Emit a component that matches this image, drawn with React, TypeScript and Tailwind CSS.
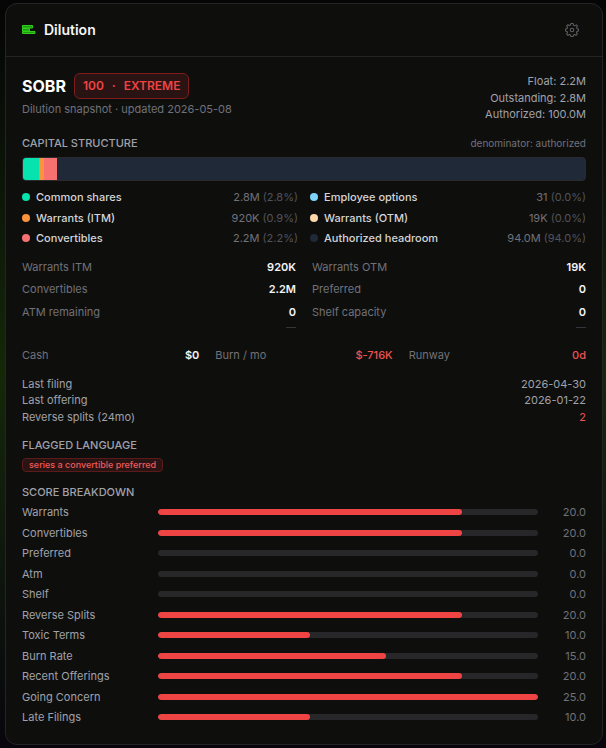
type LegendItem = {
  label: string;
  value: string;
  pct: string;
  dot: string;
};

type Stat = {
  label: string;
  value: string;
  note?: string;
  danger?: boolean;
};

const legend: LegendItem[] = [
  { label: 'Common shares', value: '2.8M', pct: '2.8%', dot: 'bg-[#06e3ae]' },
  { label: 'Employee options', value: '31', pct: '0.0%', dot: 'bg-[#7dd3fc]' },
  { label: 'Warrants (ITM)', value: '920K', pct: '0.9%', dot: 'bg-[#fb923c]' },
  { label: 'Warrants (OTM)', value: '19K', pct: '0.0%', dot: 'bg-[#fed7aa]' },
  { label: 'Convertibles', value: '2.2M', pct: '2.2%', dot: 'bg-[#f87171]' },
  { label: 'Authorized headroom', value: '94.0M', pct: '94.0%', dot: 'bg-[#1f2937]' },
];

const segments = [
  { key: 'common', pct: 2.9, color: 'bg-[#06e3ae]' },
  { key: 'itm', pct: 0.9, color: 'bg-[#fb923c]' },
  { key: 'convertibles', pct: 2.3, color: 'bg-[#f87171]' },
];

const stats: Stat[] = [
  { label: 'Warrants ITM', value: '920K' },
  { label: 'Warrants OTM', value: '19K' },
  { label: 'Convertibles', value: '2.2M' },
  { label: 'Preferred', value: '0' },
  { label: 'ATM remaining', value: '0', note: '—' },
  { label: 'Shelf capacity', value: '0', note: '—' },
];

const cash: Stat[] = [
  { label: 'Cash', value: '$0' },
  { label: 'Burn / mo', value: '$-716K', danger: true },
  { label: 'Runway', value: '0d', danger: true },
];

const events: Stat[] = [
  { label: 'Last filing', value: '2026-04-30' },
  { label: 'Last offering', value: '2026-01-22' },
  { label: 'Reverse splits (24mo)', value: '2', danger: true },
];

const MAX_SCORE = 25;

const scores = [
  { label: 'Warrants', score: 20 },
  { label: 'Convertibles', score: 20 },
  { label: 'Preferred', score: 0 },
  { label: 'Atm', score: 0 },
  { label: 'Shelf', score: 0 },
  { label: 'Reverse Splits', score: 20 },
  { label: 'Toxic Terms', score: 10 },
  { label: 'Burn Rate', score: 15 },
  { label: 'Recent Offerings', score: 20 },
  { label: 'Going Concern', score: 25 },
  { label: 'Late Filings', score: 10 },
];

function DilutionIcon() {
  return (
    <svg className="w-3.5 h-3.5" viewBox="0 0 14 14" fill="#1f9a12" stroke="#2fd01a" aria-hidden="true">
      <path d="M.5 2.500h10v2.500H.5zM.5 5.500h7v2.500h-7zM.5 8.500h12.500v2H.5z" />
    </svg>
  );
}

function GearIcon() {
  return (
    <svg className="w-3.5 h-3.5" viewBox="0 0 24 24" fill="none" stroke="currentColor" strokeWidth={1.8} strokeLinejoin="round" aria-hidden="true">
      <path d="M10 1h4l.8 3.100 1.800.8L19.400 3.200l2 2-1.500 2.600.8 1.900L23 10.200v3.600l-2.600.7-.8 1.900 1.500 2.500-2.200 2.200-2.500-1.500-1.800.8L14 23h-4l-.7-2.600-1.800-.8L5 21.100l-2.200-2.200 1.500-2.500-.8-1.900L1 13.800v-3.600l2.600-.7.8-1.900-1.500-2.500L5 2.900l2.500 1.500 1.800-.8z" />
      <circle cx="12" cy="12" r="3" />
    </svg>
  );
}

function SectionTitle({ children }: { children: string }) {
  return <h3 className="font-medium uppercase text-[#a1a1aa]">{children}</h3>;
}

export default function App() {
  return (
    <div className="min-h-screen bg-linear-to-b from-[#050505] via-[#142808] via-50% to-[#08060c] pt-[3px] pr-[3px] pb-[3px] pl-[5px] font-['Inter','Liberation_Sans',sans-serif] text-[11px]">
      <section className="rounded-xl border border-[#242424] bg-[#0e0f0d]">
        <header className="flex items-center justify-between h-[53px] px-4 border-b border-[#242424]">
          <div className="flex items-center gap-2">
            <DilutionIcon />
            <h1 className="text-sm font-semibold text-[#f4f4f5]">Dilution</h1>
          </div>
          <button type="button" aria-label="Settings" className="flex items-center justify-center w-7 h-7 text-[#5f5f63]">
            <GearIcon />
          </button>
        </header>

        <div className="flex flex-col gap-3 px-4 pt-4 pb-[18px]">
          {/* Ticker and share counts */}
          <div className="flex items-start justify-between">
            <div>
              <div className="flex items-center gap-2 h-[26px]">
                <h2 className="text-base font-bold text-white">SOBR</h2>
                <span className="flex items-center gap-2 h-[26px] px-2 rounded-md border border-[#7f1d1d] bg-[#2a1313] text-xs font-semibold text-[#ef4444]">
                  <span>100</span>
                  <span>·</span>
                  <span>EXTREME</span>
                </span>
              </div>
              <p className="mt-0.5 text-[#71717a]">Dilution snapshot · updated 2026-05-08</p>
            </div>
            <div className="text-right text-[#a1a1aa]">
              <div>Float: 2.2M</div>
              <div>Outstanding: 2.8M</div>
              <div>Authorized: 100.0M</div>
            </div>
          </div>

          {/* Capital structure */}
          <div>
            <div className="flex items-center justify-between mb-1.5">
              <SectionTitle>Capital structure</SectionTitle>
              <span className="text-[10px] leading-4 text-[#71717a]">denominator: authorized</span>
            </div>
            <div className="flex h-6 rounded border border-[#2b2b2e] bg-[#1f2937] overflow-hidden">
              {segments.map((s) => (
                <div key={s.key} className={s.color} style={{ width: `${s.pct}%` }} />
              ))}
            </div>
            <ul className="grid grid-cols-2 gap-x-3 gap-y-1 mt-2">
              {legend.map((item) => (
                <li key={item.label} className="flex items-center gap-1.5">
                  <span className={`w-2 h-2 rounded-full ${item.dot}`} />
                  <span className="font-medium text-[#d4d4d8]">{item.label}</span>
                  <span className="ml-auto text-[#71717a]">
                    {item.value} <span className="text-[#52525b]">({item.pct})</span>
                  </span>
                </li>
              ))}
            </ul>
          </div>

          <dl className="grid grid-cols-2 gap-x-4 gap-y-1.5">
            {stats.map((s) => (
              <div key={s.label} className="flex justify-between">
                <dt className="text-[#71717a]">{s.label}</dt>
                <dd className="text-right font-semibold text-[#f4f4f5]">
                  {s.value}
                  {s.note && <div className="text-[10px] font-normal text-[#3f3f46]">{s.note}</div>}
                </dd>
              </div>
            ))}
          </dl>

          <dl className="grid grid-cols-3 gap-x-4">
            {cash.map((s) => (
              <div key={s.label} className="flex justify-between">
                <dt className="text-[#71717a]">{s.label}</dt>
                <dd className={s.danger ? 'font-medium text-[#f05252]' : 'font-semibold text-[#f4f4f5]'}>{s.value}</dd>
              </div>
            ))}
          </dl>

          <dl className="text-[#a1a1aa]">
            {events.map((e) => (
              <div key={e.label} className="flex justify-between">
                <dt>{e.label}</dt>
                <dd className={e.danger ? 'text-[#f05252]' : ''}>{e.value}</dd>
              </div>
            ))}
          </dl>

          <div>
            <SectionTitle>Flagged language</SectionTitle>
            <div className="flex mt-1">
              <span className="px-1.5 rounded border border-[#5c1a1a] bg-[#2a1313] text-[9px] leading-3 font-medium text-[#f05a5a]">
                series a convertible preferred
              </span>
            </div>
          </div>

          <div>
            <SectionTitle>Score breakdown</SectionTitle>
            <ul className="flex flex-col gap-1 mt-1">
              {scores.map((s) => (
                <li key={s.label} className="flex items-center gap-2">
                  <span className="w-32 text-[#a1a1aa]">{s.label}</span>
                  <div className="flex-1 h-1.5 rounded-full bg-[#27272a] overflow-hidden">
                    <div className="h-full rounded-full bg-[#ef4444]" style={{ width: `${(s.score / MAX_SCORE) * 100}%` }} />
                  </div>
                  <span className="w-10 text-right text-[#71717a]">{s.score.toFixed(1)}</span>
                </li>
              ))}
            </ul>
          </div>
        </div>
      </section>
    </div>
  );
}
